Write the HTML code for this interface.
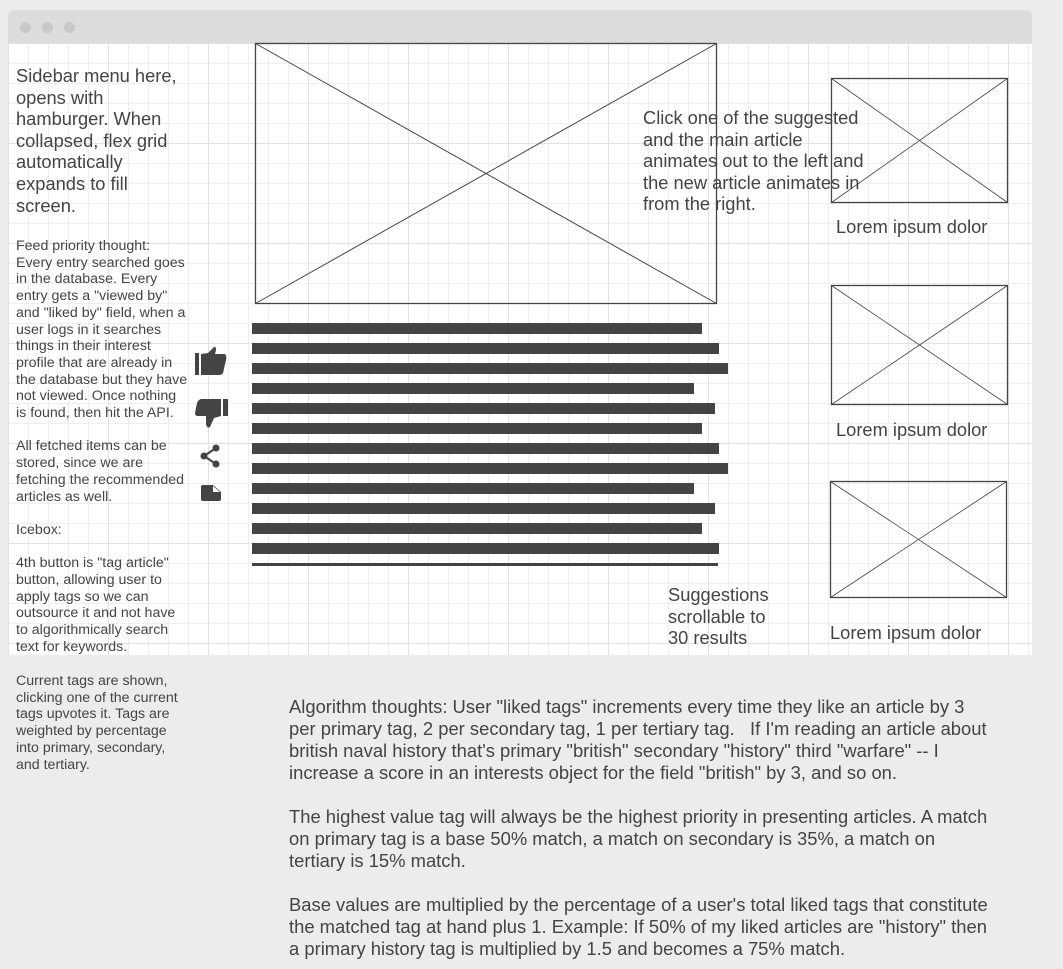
<!DOCTYPE html>
<html><head><meta charset="utf-8"><style>
*{margin:0;padding:0;box-sizing:border-box}
body{width:1063px;height:969px;background:#ececec;font-family:"Liberation Sans",Arial,sans-serif;color:#444;position:relative;overflow:hidden}
.frame{position:absolute;left:8px;top:10px;width:1024px;height:645px;border-radius:6px 6px 0 0;overflow:hidden;background:#fff}
.tb{position:absolute;left:0;top:0;width:100%;height:33px;background:#dcdcdc}
.dot{position:absolute;top:12px;width:11px;height:11px;border-radius:50%;background:#c8c8c8}
.grid{position:absolute;left:0;top:33px;width:1024px;height:612px;
background-image:linear-gradient(#e2e2e2 1px,transparent 1px),linear-gradient(90deg,#e2e2e2 1px,transparent 1px),linear-gradient(#efefef 1px,transparent 1px),linear-gradient(90deg,#efefef 1px,transparent 1px);
background-size:100px 100px,100px 100px,20px 20px,20px 20px;background-position:0 0,0 0,0 0,0 0}
.a{position:absolute;white-space:nowrap}
.bar{position:absolute;left:252px;height:11px;background:#444}
.t17{font-size:18.3px;line-height:21.6px}
.t13{font-size:14.2px;line-height:16.7px}
.t16{font-size:18.4px;line-height:22px}
</style></head><body>
<div class="frame">
<div class="tb"><div class="dot" style="left:12px"></div><div class="dot" style="left:34px"></div><div class="dot" style="left:56px"></div></div>
<div class="grid"></div>
</div>
<svg class="a" style="left:0;top:0" width="1063" height="969">
<g fill="none" stroke="#444" stroke-width="1.3">
<rect x="255.5" y="43.5" width="461" height="260"/>
<line x1="255.5" y1="43.5" x2="716.5" y2="303.5" stroke-width="1"/><line x1="716.5" y1="43.5" x2="255.5" y2="303.5" stroke-width="1"/>
<rect x="831.5" y="78.5" width="176" height="124"/>
<line x1="831.5" y1="78.5" x2="1007.5" y2="202.5" stroke-width="0.8"/><line x1="1007.5" y1="78.5" x2="831.5" y2="202.5" stroke-width="0.8"/>
<rect x="831.5" y="285.5" width="176" height="119"/>
<line x1="831.5" y1="285.5" x2="1007.5" y2="404.5" stroke-width="0.8"/><line x1="1007.5" y1="285.5" x2="831.5" y2="404.5" stroke-width="0.8"/>
<rect x="830.5" y="481.5" width="176" height="116"/>
<line x1="830.5" y1="481.5" x2="1006.5" y2="597.5" stroke-width="0.8"/><line x1="1006.5" y1="481.5" x2="830.5" y2="597.5" stroke-width="0.8"/>
</g>
<g fill="#444">
<rect x="195" y="353" width="4" height="22"/>
<path d="M201 354 L208 353 L214 347 Q216 346 216 350 L215 354 L225 354 Q227 356 226 360 L223 373 Q222 375 219 375 L201 375 Z"/>
<rect x="223" y="399" width="5" height="17"/>
<path d="M221 399 L201 399 Q198 400 197 403 L195 413 Q195 416 198 416 L206 416 L206 424 Q207 429 210 427 L214 418 L221 416 Z"/>
<circle cx="216" cy="448" r="3.5"/><circle cx="204" cy="456" r="3.5"/><circle cx="216" cy="464" r="3.5"/>
<path d="M216 448 L204 456 L216 464" stroke="#444" stroke-width="2" fill="none"/>
<path d="M203 485 L213 485 L221 492 L221 499 Q221 501 219 501 L203 501 Q201 501 201 499 L201 487 Q201 485 203 485 Z"/>
</g>
<g fill="#fff"><path d="M213 486 L213 492 L220 492 Z"/></g>
</svg>
<div class="bar" style="top:323px;width:450px"></div>
<div class="bar" style="top:343px;width:467px"></div>
<div class="bar" style="top:363px;width:476px"></div>
<div class="bar" style="top:383px;width:442px"></div>
<div class="bar" style="top:403px;width:463px"></div>
<div class="bar" style="top:423px;width:450px"></div>
<div class="bar" style="top:443px;width:467px"></div>
<div class="bar" style="top:463px;width:476px"></div>
<div class="bar" style="top:483px;width:442px"></div>
<div class="bar" style="top:503px;width:463px"></div>
<div class="bar" style="top:523px;width:450px"></div>
<div class="bar" style="top:543px;width:467px"></div>
<div class="bar" style="top:563px;width:466px;height:3px"></div>

<div class="a t17" style="left:16px;top:65px">Sidebar menu here,<br>opens with<br>hamburger. When<br>collapsed, flex grid<br>automatically<br>expands to fill<br>screen.</div>
<div class="a t13" style="left:16px;top:238px">Feed priority thought:<br>Every entry searched goes<br>in the database. Every<br>entry gets a "viewed by"<br>and "liked by" field, when a<br>user logs in it searches<br>things in their interest<br>profile that are already in<br>the database but they have<br>not viewed. Once nothing<br>is found, then hit the API.<br><br>All fetched items can be<br>stored, since we are<br>fetching the recommended<br>articles as well.<br><br>Icebox:<br><br>4th button is "tag article"<br>button, allowing user to<br>apply tags so we can<br>outsource it and not have<br>to algorithmically search<br>text for keywords.</div>
<div class="a t13" style="left:16px;top:673px">Current tags are shown,<br>clicking one of the current<br>tags upvotes it. Tags are<br>weighted by percentage<br>into primary, secondary,<br>and tertiary.</div>
<div class="a t17" style="left:643px;top:107px">Click one of the suggested<br>and the main article<br>animates out to the left and<br>the new article animates in<br>from the right.</div>
<div class="a t17" style="left:836px;top:216px">Lorem ipsum dolor</div>
<div class="a t17" style="left:836px;top:419px">Lorem ipsum dolor</div>
<div class="a t17" style="left:830px;top:622px">Lorem ipsum dolor</div>
<div class="a t17" style="left:668px;top:584px">Suggestions<br>scrollable to<br>30 results</div>
<div class="a t16" style="left:289px;top:696px">Algorithm thoughts: User "liked tags" increments every time they like an article by 3<br>per primary tag, 2 per secondary tag, 1 per tertiary tag.&nbsp;&nbsp; If I'm reading an article about<br>british naval history that's primary "british" secondary "history" third "warfare" -- I<br>increase a score in an interests object for the field "british" by 3, and so on.<br><br>The highest value tag will always be the highest priority in presenting articles. A match<br>on primary tag is a base 50% match, a match on secondary is 35%, a match on<br>tertiary is 15% match.<br><br>Base values are multiplied by the percentage of a user's total liked tags that constitute<br>the matched tag at hand plus 1. Example: If 50% of my liked articles are "history" then<br>a primary history tag is multiplied by 1.5 and becomes a 75% match.</div>
</body></html>
